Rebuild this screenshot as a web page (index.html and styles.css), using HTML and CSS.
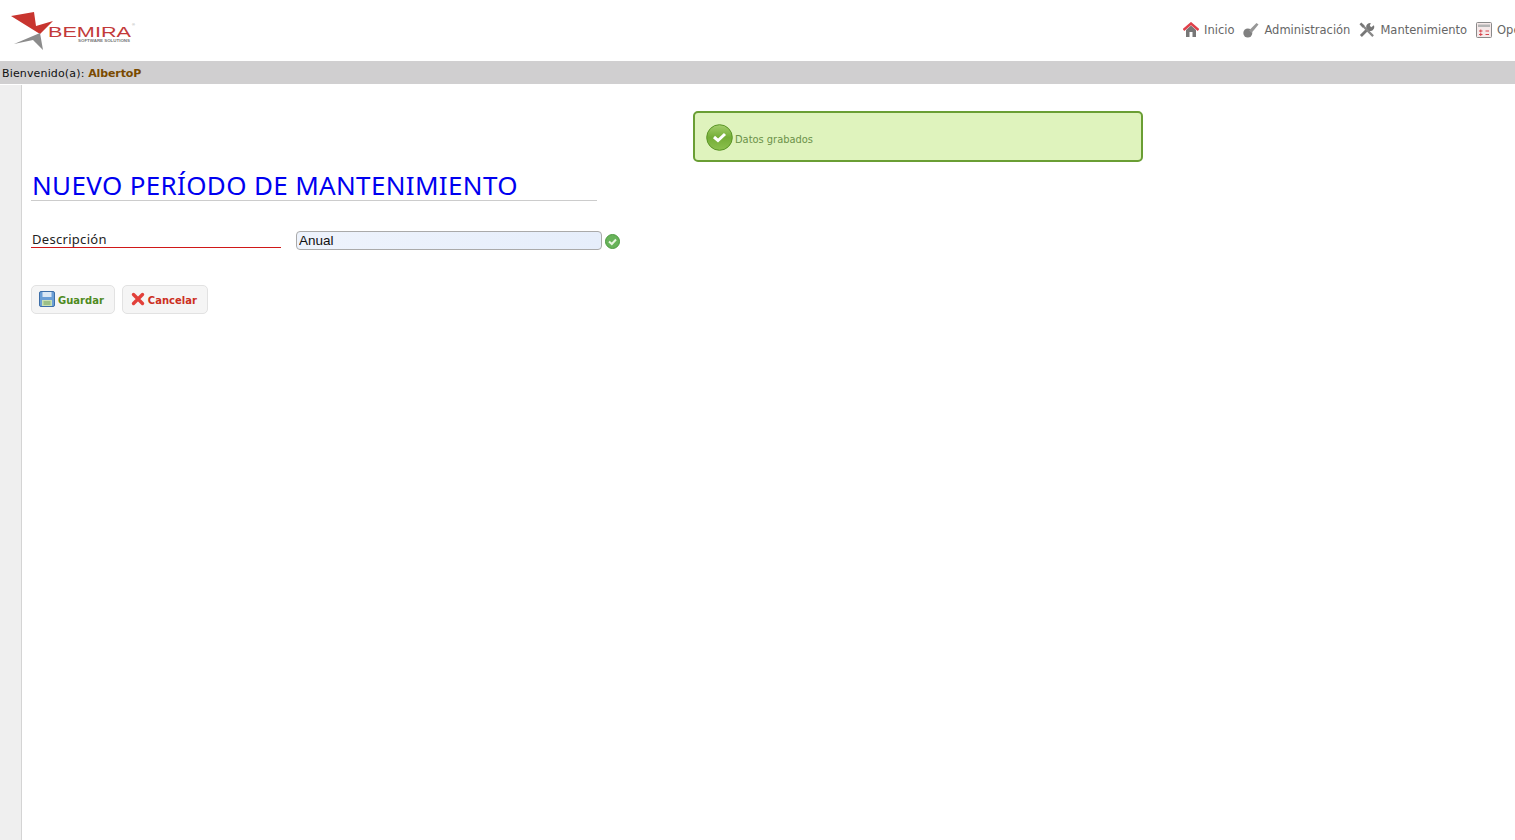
FILE: index.html
```html
<!DOCTYPE html>
<html lang="es">
<head>
<meta charset="utf-8">
<title>Nuevo período de mantenimiento</title>
<link rel="stylesheet" href="styles.css">
</head>
<body>
<header class="top">
  <div class="logo-area">
    <svg class="logo" width="126" height="42" viewBox="0 0 126 42">
      <path d="M1 6 L24 2 L26 16 L43 11 L30 24 Z" fill="#c8352f"/>
      <path d="M4 34 L30 23 L33 40 L23 30 Z" fill="#8c8c8c"/>
      <text x="38" y="26.500" class="logo-name" textLength="83" lengthAdjust="spacingAndGlyphs">BEMIRA</text>
      <text x="68" y="31.500" class="logo-sub" textLength="52" lengthAdjust="spacingAndGlyphs">SOFTWARE SOLUTIONS</text>
      <text x="122" y="16" class="logo-tm">®</text>
    </svg>
  </div>
  <nav class="nav">
    <a class="nav-item">
      <svg width="16" height="16" viewBox="0 0 16 16"><path d="M3 8 V15 H6.500 V10 H9.500 V15 H13 V8 L8 3.500 Z" fill="#777"/><path d="M0.500 8 L8 1.500 L15.500 8" fill="none" stroke="#e0404a" stroke-width="2.400"/></svg>
      Inicio
    </a>
    <a class="nav-item">
      <svg width="16" height="16" viewBox="0 0 16 16"><circle cx="4.800" cy="11" r="4.500" fill="#808080"/><path d="M6 8.500 L13.500 1 L15.500 2.500 L8.500 11 Z" fill="#979797"/></svg>
      Administración
    </a>
    <a class="nav-item">
      <svg width="16" height="16" viewBox="0 0 17 17"><path d="M2 15 L10.500 6.500" stroke="#777" stroke-width="3"/><path d="M15.800 3.500 A4.300 4.300 0 1 1 12.500 1 L11.500 4 L13 5.500 Z" fill="#777"/><path d="M3 3 L15 15" stroke="#888" stroke-width="2.400"/><path d="M0.500 2.500 L2.500 0.500 L6 4 L4 6 Z" fill="#777"/></svg>
      Mantenimiento
    </a>
    <a class="nav-item">
      <svg width="16" height="16" viewBox="0 0 16 16"><rect x="0.500" y="0.500" width="15" height="15" rx="1" fill="#f5e9e9" stroke="#8a8a8a"/><rect x="2" y="2.500" width="12" height="2.500" fill="#b5b5b5"/><path d="M3 9 H6.500 M9.500 9 H13 M3 12.500 H6.500 M9.500 12.500 H13 M4.750 7.500 V10.500 M4.750 11 V14" stroke="#d8434c"/></svg>
      Operación
    </a>
  </nav>
</header>
<div class="welcome">Bienvenido(a): <strong class="user">AlbertoP</strong></div>
<div class="page">
  <aside class="side"></aside>
  <main class="content">
    <div class="notice">
      <svg class="notice-icon" width="27" height="27" viewBox="0 0 27 27"><defs><linearGradient id="ng" x1="0" y1="0" x2="0" y2="1"><stop offset="0" stop-color="#a4cf6c"/><stop offset=".5" stop-color="#74ad36"/><stop offset="1" stop-color="#8cc04e"/></linearGradient></defs><circle cx="13.500" cy="13.500" r="12.800" fill="url(#ng)" stroke="#5a9426"/><path d="M8 13 L12 16.500 L19 10" fill="none" stroke="#fff" stroke-width="3"/></svg>
      <span class="notice-text">Datos grabados</span>
    </div>
    <h1 class="title">NUEVO PERÍODO DE MANTENIMIENTO</h1>
    <form class="form">
      <div class="field">
        <label class="label">Descripción</label>
        <input class="input" type="text" value="Anual">
        <svg class="ok" width="15" height="15" viewBox="0 0 15 15"><circle cx="7.500" cy="7.500" r="7" fill="#68b35a" stroke="#4c9a40"/><path d="M4 7.500 L6.800 10 L11 5.500" fill="none" stroke="#e8f5e0" stroke-width="2"/></svg>
      </div>
      <div class="actions">
        <button type="button" class="btn btn-save">
          <svg width="16" height="16" viewBox="0 0 16 16"><rect x="0.500" y="0.500" width="15" height="15" rx="1.500" fill="#6a9ed6" stroke="#3d6ea8"/><rect x="3.500" y="1" width="9" height="5" fill="#dbe8f5"/><rect x="3" y="9" width="10" height="6" fill="#c9e0b5"/><path d="M4.500 11 H11.500 M4.500 13 H11.500" stroke="#6f9f58"/></svg>
          Guardar
        </button>
        <button type="button" class="btn btn-cancel">
          <svg width="14" height="14" viewBox="0 0 14 14"><path d="M2.500 2.500 L11.500 11.500 M11.500 2.500 L2.500 11.500" stroke="#e2403a" stroke-width="3.400" stroke-linecap="round"/></svg>
          Cancelar
        </button>
      </div>
    </form>
  </main>
</div>
</body>
</html>
```
FILE: styles.css
```css
html, body {
  margin: 0;
  height: 100%;
  overflow: hidden;
  background: #fff;
  font-family: "DejaVu Sans", Verdana, sans-serif;
}
.top {
  display: flex;
  align-items: flex-start;
  height: 61px;
  background: #fff;
}
.logo-area {
  flex: 0 0 1183px;
  padding: 10px 0 0 10px;
  box-sizing: border-box;
}
.logo { display: block; }
.logo-name {
  font-family: "Liberation Sans", sans-serif;
  font-size: 15.500px;
  fill: #c33a3a;
}
.logo-sub {
  font-family: "Liberation Sans", sans-serif;
  font-size: 3.500px;
  font-weight: bold;
  fill: #777;
}
.logo-tm {
  font-family: "Liberation Sans", sans-serif;
  font-size: 4px;
  fill: #999;
}
.nav {
  display: flex;
  flex: none;
  gap: 9px;
  padding-top: 22px;
  white-space: nowrap;
}
.nav-item {
  display: flex;
  align-items: center;
  gap: 5px;
  font-size: 11.500px;
  line-height: 16px;
  color: #666;
}
.welcome {
  height: 23px;
  line-height: 25px;
  background: #d0cfd0;
  font-size: 11px;
  letter-spacing: .15px;
  padding-left: 2px;
  color: #111;
}
.user { color: #7a4a00; letter-spacing: -.1px; }
.page {
  display: flex;
  height: calc(100vh - 84px);
  padding-top: 1px;
  box-sizing: border-box;
}
.side {
  flex: 0 0 21px;
  background: #efefef;
  border-right: 1px solid #d4d4d4;
}
.content {
  flex: 1;
  padding: 26px 0 0 9px;
}
.notice {
  display: flex;
  align-items: center;
  box-sizing: border-box;
  width: 450px;
  height: 51px;
  margin-left: 662px;
  padding: 1px 0 0 11px;
  background: #dff3bd;
  border: 2px solid #6a9e34;
  border-radius: 5px;
  gap: 2px;
}
.notice-text {
  font-size: 9.900px;
  color: #6b9149;
  padding-top: 5px;
}
.title {
  box-sizing: border-box;
  width: 566px;
  height: 29px;
  margin: 10px 0 0;
  padding-left: 1px;
  border-bottom: 1px solid #ccc;
  font-family: "Noto Sans", sans-serif;
  font-weight: 400;
  font-size: 26px;
  letter-spacing: .34px;
  line-height: 26px;
  color: #0000f0;
  white-space: nowrap;
}
.field {
  display: flex;
  align-items: flex-start;
  margin-top: 30px;
}
.label {
  box-sizing: border-box;
  flex: 0 0 250px;
  height: 17px;
  padding-left: 1px;
  border-bottom: 1px solid #d01818;
  font-family: "Noto Sans", sans-serif;
  font-size: 13px;
  letter-spacing: .3px;
  line-height: 17px;
  color: #222;
}
.input {
  box-sizing: border-box;
  width: 306px;
  height: 19px;
  margin: 0 3px 0 15px;
  padding: 0 2px;
  border: 1px solid #aaa;
  border-radius: 4px;
  background: linear-gradient(90deg, #eef3fc, #e6eefb);
  font-family: "Liberation Sans", sans-serif;
  font-size: 13.500px;
  color: #111;
}
.ok { margin-top: 3px; }
.actions {
  display: flex;
  gap: 7px;
  margin-top: 35px;
}
.btn {
  display: flex;
  align-items: center;
  gap: 3px;
  box-sizing: border-box;
  height: 29px;
  padding: 1px 10px 0 8px;
  border: 1px solid #e2e2e2;
  border-radius: 5px;
  background: #f5f5f5;
  font-family: "DejaVu Sans", sans-serif;
  font-weight: 700;
  font-size: 10px;
}
.btn svg { margin-bottom: 2px; }
.btn-save { color: #4f8a1e; padding-left: 7px; }
.btn-cancel { color: #cc2f22; }
```
